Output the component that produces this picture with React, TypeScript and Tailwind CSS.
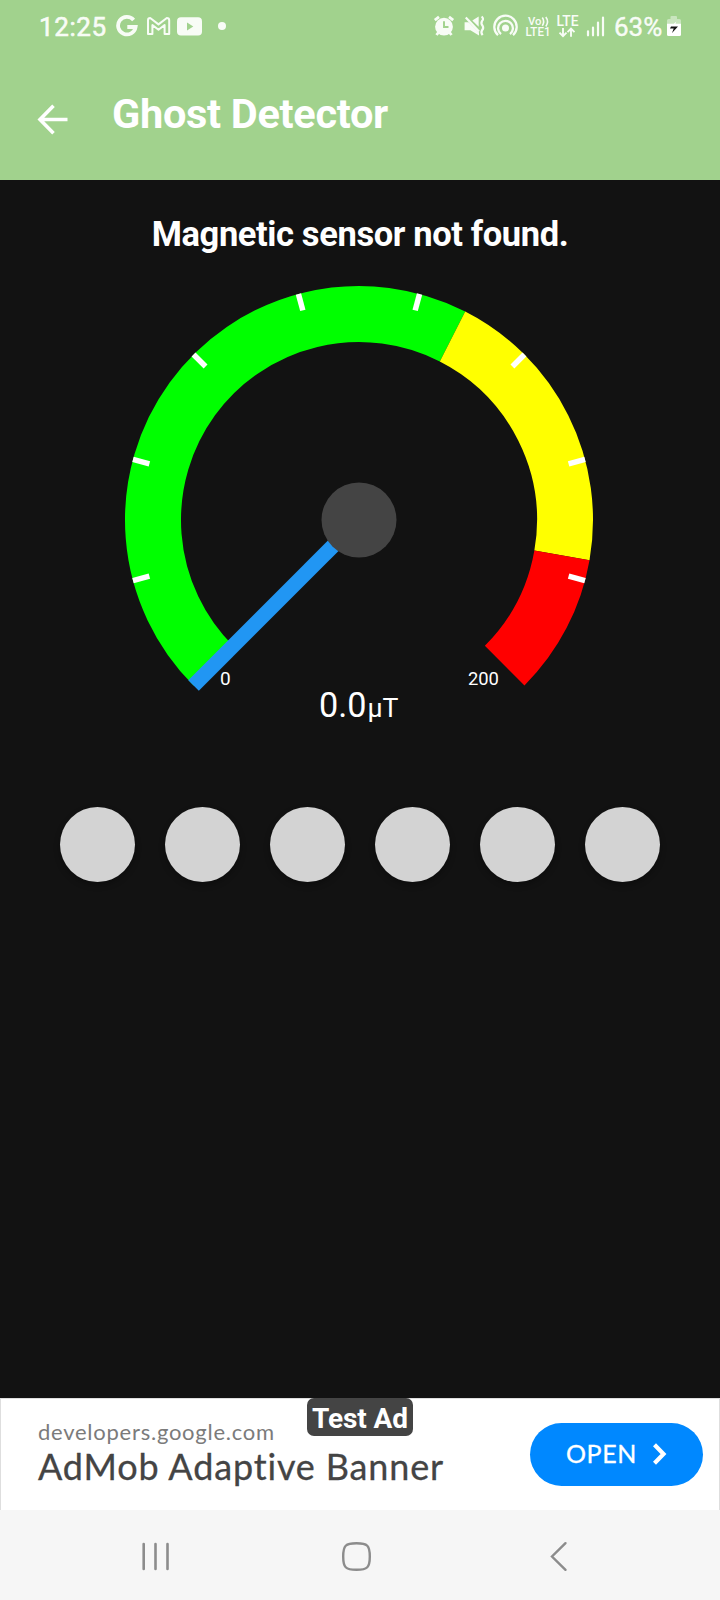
import React from "react";

const CX = 359;
const CY = 520;

function polar(r: number, deg: number): [number, number] {
  const a = (deg * Math.PI) / 180;
  return [CX + r * Math.cos(a), CY + r * Math.sin(a)];
}

function arc(r: number, from: number, to: number) {
  const [x1, y1] = polar(r, from);
  const [x2, y2] = polar(r, to);
  return `M${x1} ${y1}A${r} ${r} 0 ${to - from > 180 ? 1 : 0} 1 ${x2} ${y2}`;
}

const TICKS = [165, 195, 225, 255, 285, 315, 345, 375];

function Gauge() {
  const [nx, ny] = polar(234, 135);
  return (
    <svg className="block h-[470px] w-[720px]" viewBox="0 270 720 470" fontFamily="Roboto, sans-serif" fill="#fff">
      <g fill="none" strokeWidth="56">
        <path d={arc(206, 135, 297)} stroke="#00ff00" />
        <path d={arc(206, 297, 369.9)} stroke="#ffff00" />
        <path d={arc(206, 369.9, 405)} stroke="#ff0000" />
      </g>
      {TICKS.map((t) => {
        const [x1, y1] = polar(234, t);
        const [x2, y2] = polar(217, t);
        return <line key={t} x1={x1} y1={y1} x2={x2} y2={y2} stroke="#fff" strokeWidth="5.5" />;
      })}
      <text x="220" y="685" fontSize="19">0</text>
      <text x="467.9" y="685" fontSize="19" textLength="31" lengthAdjust="spacingAndGlyphs">200</text>
      <text x="319" y="716.5" fontSize="35" textLength="47.5" lengthAdjust="spacingAndGlyphs">0.0</text>
      <text x="367.5" y="716.5" fontSize="26" textLength="31" lengthAdjust="spacingAndGlyphs">µT</text>
      <line x1={CX} y1={CY} x2={nx} y2={ny} stroke="#2196f3" strokeWidth="15" />
      <circle cx={CX} cy={CY} r="37.5" fill="#444" />
    </svg>
  );
}

function StatusBar() {
  return (
    <div className="flex h-[52px] items-center text-[26px] leading-[52px] font-medium text-[#f8fcf6]">
      <span className="mt-[2px] ml-[39px] w-[77px] font-normal tracking-[0.6px] [-webkit-text-stroke:0.6px_#f8fcf6]">12:25</span>
      <svg className="h-[52px] w-[120px] shrink-0" viewBox="116 0 120 52" fill="none" stroke="currentColor">
        <path d="M133.6 19.9A8.8 8.8 0 1 0 135.6 27H127.3" strokeWidth="3.8" />
        <path d="M148 34V20.2Q148 18 150.2 18L158.5 24.4L166.8 18Q169.2 18 169.2 20.2V34H164.6V25L158.5 29.8L152.4 25V34Z" strokeWidth="2" strokeLinejoin="round" />
        <rect x="177" y="17.3" width="25" height="18.2" rx="4" fill="currentColor" stroke="none" />
        <path d="M187 22.5L193.3 26.5L187 30.5Z" fill="#a1d28d" stroke="none" />
        <circle cx="222" cy="26" r="4" fill="currentColor" stroke="none" />
      </svg>
      <svg className="ml-[196px] h-[52px] w-[180px] shrink-0" viewBox="432 0 180 52" fill="none" stroke="currentColor" fontFamily="Roboto, sans-serif">
        <circle cx="444" cy="26.7" r="8.9" fill="currentColor" stroke="none" />
        <path d="M434.8 20.2L439 16.9M453.2 20.2L449 16.9M438.8 32L436.5 35M449.2 32L451.5 35" strokeWidth="2.8" />
        <path d="M444 21.2V27H448.5" stroke="#a1d28d" strokeWidth="1.9" />
        <path d="M464.6 22.2H468.7L479 32.5V35.5L470.4 30.3H464.6Z" fill="currentColor" stroke="none" />
        <path d="M472.3 20.4L478.7 16.6V26.8Z" fill="currentColor" stroke="none" />
        <path d="M465.8 17.6L479 31.5" strokeWidth="2.2" />
        <path d="M481.6 16.5q2.6 2.3 .4 4.6q-1.4 2.3 .6 4.6q1.4 2.3 -.6 4.6q-1.4 2.3 .6 4.8" strokeWidth="2.2" />
        <circle cx="505.5" cy="28" r="3.5" fill="currentColor" stroke="none" />
        <path d="M501 34.2A7.4 7.4 0 1 1 510 34.2M498 35.2A11.2 11.2 0 1 1 513 35.2" strokeWidth="2.3" />
        <g fill="currentColor" stroke="none" fontWeight="500">
          <text x="528" y="25" fontSize="11" textLength="13.5" lengthAdjust="spacingAndGlyphs">Vo</text>
          <text x="525.5" y="36" fontSize="12" textLength="25" lengthAdjust="spacingAndGlyphs">LTE1</text>
          <text x="556.5" y="25.5" fontSize="14" textLength="22" lengthAdjust="spacingAndGlyphs">LTE</text>
        </g>
        <path d="M542.3 17.5Q545 21.5 542.3 25.8M545.8 17Q549.2 21.5 545.8 26.5" strokeWidth="1.6" />
        <path d="M563 28V36M559.5 32.7L563 36.2L566.5 32.7M571 36.8V29M567.5 32.2L571 28.7L574.5 32.2" strokeWidth="1.9" />
        <path d="M588 31.3V35.3M593 27.6V35.3M598 22.6V35.3M603 17.6V35.3" strokeWidth="2.2" strokeLinecap="round" />
      </svg>
      <span className="mt-[2px] ml-[2px] w-[52px] font-normal [-webkit-text-stroke:0.4px_#f8fcf6]">63%</span>
      <svg className="h-[52px] w-[16px] shrink-0" viewBox="666 0 16 52">
        <path d="M670.5 19V17Q670.5 16 671.5 16H676Q677 16 677 17V19H679.5Q681 19 681 20.5V24H667V20.5Q667 19 668.5 19Z" fill="#c9e5be" />
        <path d="M667 23.7H681V34.5Q681 36 679.5 36H668.5Q667 36 667 34.5Z" fill="#fff" />
        <path d="M676.3 21.5L670.2 27.6H674L672 32.8L678 26.6H674.5Z" fill="#fff" />
        <path d="M671 26.4H678L672 33L673.7 28.6H670Z" fill="#141414" />
      </svg>
    </div>
  );
}

function AdBanner() {
  return (
    <div className="relative flex h-[112px] items-center justify-between border-x border-t border-[#dedede] bg-white pr-4 pl-[37px]">
      <div className="-mt-[6px] flex flex-col font-['Lato',sans-serif]">
        <span className="text-[22px] leading-[29px] tracking-[0.75px] text-[#7b7b7b]">developers.google.com</span>
        <span className="text-[36px] leading-[41px] tracking-[0.84px] text-[#444] [-webkit-text-stroke:0.3px_#444]">AdMob Adaptive Banner</span>
      </div>
      <div className="-mt-px flex h-[63px] w-[173px] items-center rounded-full bg-[#0088ff] pl-9 font-['Lato',sans-serif] text-[25px] text-white">
        <span className="w-[87px] tracking-[0.6px] [-webkit-text-stroke:0.3px_#fff]">OPEN</span>
        <svg className="h-[22px] w-[14px]" viewBox="0 0 14 22" fill="none" stroke="#fff" strokeWidth="4.2">
          <path d="M1.5 1.8L10.5 11L1.5 20.2" />
        </svg>
      </div>
      <div className="absolute -top-px left-[306px] flex h-[38px] w-[106px] items-center justify-center rounded-[7px] bg-[#444] pt-[3px] text-[28px] font-bold tracking-[-0.1px] whitespace-nowrap text-white">
        Test Ad
      </div>
    </div>
  );
}

function NavBar() {
  return (
    <div className="h-[90px] bg-[#f6f6f6]">
      <svg className="block h-[90px] w-[720px]" viewBox="0 1510 720 90" fill="none" stroke="#8c8c8c" strokeWidth="2.6" strokeLinecap="round">
        <path d="M143.7 1544V1569M155.5 1544V1569M167.5 1544V1569" />
        <path d="M356.5 1543.2C367.5 1543.2 369.8 1545.5 369.8 1556.5S367.5 1569.8 356.5 1569.8S343.2 1567.5 343.2 1556.5S345.5 1543.2 356.5 1543.2Z" strokeWidth="2.4" />
        <path d="M565.5 1543.2L552 1556.5L565.5 1569.8" strokeWidth="2.4" />
      </svg>
    </div>
  );
}

export default function App() {
  return (
    <div className="flex h-[1600px] w-[720px] flex-col overflow-hidden bg-[#121212] font-['Roboto',sans-serif]">
      <header className="h-[180px] bg-[#a1d28d]">
        <StatusBar />
        <div className="flex items-center pt-[36px]">
          <svg className="mt-[11px] ml-[37px] h-[31px] w-[31px]" viewBox="0 0 31 31" fill="none" stroke="#fff" strokeWidth="3.6">
            <path d="M30.5 15.5H3M16.5 1.8L3 15.5L16.5 29.2" />
          </svg>
          <h1 className="mt-px ml-[44px] text-[41.5px] leading-[50px] font-bold tracking-[-0.3px] text-white">Ghost Detector</h1>
        </div>
      </header>
      <main className="flex grow flex-col">
        <h2 className="mt-[34px] h-[56px] text-center text-[34.5px] leading-[40px] font-bold tracking-[-0.39px] text-white">Magnetic sensor not found.</h2>
        <Gauge />
        <div className="mt-[67px] flex justify-center gap-[30px]">
          {[0, 1, 2, 3, 4, 5].map((i) => (
            <div key={i} className="size-[75px] rounded-full bg-[#d3d3d3] shadow-[0_3px_6px_rgba(0,0,0,0.3)]" />
          ))}
        </div>
      </main>
      <AdBanner />
      <NavBar />
    </div>
  );
}
